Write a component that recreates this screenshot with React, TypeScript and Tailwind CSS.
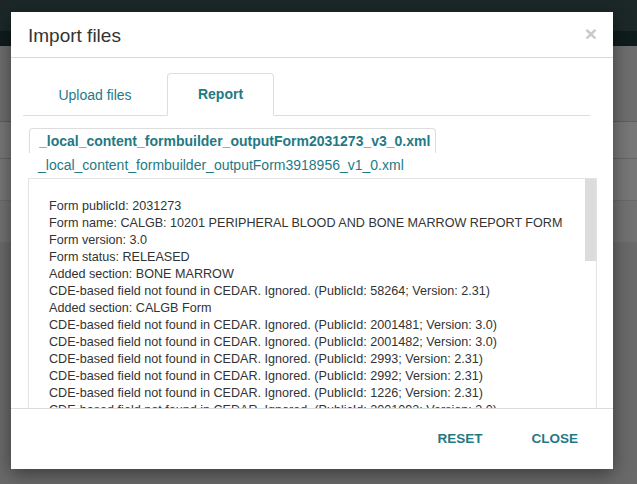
import React from "react";

const teal = "text-[#1f7a85]";

const reportLines = [
  "Form publicId: 2031273",
  "Form name: CALGB: 10201 PERIPHERAL BLOOD AND BONE MARROW REPORT FORM",
  "Form version: 3.0",
  "Form status: RELEASED",
  "Added section: BONE MARROW",
  "CDE-based field not found in CEDAR. Ignored. (PublicId: 58264; Version: 2.31)",
  "Added section: CALGB Form",
  "CDE-based field not found in CEDAR. Ignored. (PublicId: 2001481; Version: 3.0)",
  "CDE-based field not found in CEDAR. Ignored. (PublicId: 2001482; Version: 3.0)",
  "CDE-based field not found in CEDAR. Ignored. (PublicId: 2993; Version: 2.31)",
  "CDE-based field not found in CEDAR. Ignored. (PublicId: 2992; Version: 2.31)",
  "CDE-based field not found in CEDAR. Ignored. (PublicId: 1226; Version: 2.31)",
  "CDE-based field not found in CEDAR. Ignored. (PublicId: 2001093; Version: 3.0)",
];

export default function App(): React.JSX.Element {
  return (
    <div className="relative h-[484px] w-[637px] overflow-hidden bg-[#6a6a6a] font-['Liberation_Sans',Arial,sans-serif]">
      {/* page behind the backdrop */}
      <div className="h-[31px] bg-[#1c2828]"></div>
      <div className="h-[15px] bg-[#0f1c1c]"></div>
      <div className="h-[75px] bg-[#6e6e6e]"></div>
      <div className="h-[37px] border-t border-[#5f5f5f] bg-[#787878]"></div>
      <div className="h-[42px] border-t border-[#666] bg-[#777]"></div>
      <div className="h-[42px] border-t border-[#6a6a6a] bg-[#727272]"></div>

      {/* modal */}
      <div className="absolute left-[11px] top-[12px] flex h-[457px] w-[602px] flex-col bg-white shadow-[0_5px_18px_rgba(0,0,0,0.45)]">
        <div className="flex h-[46px] shrink-0 items-center justify-between border-b border-[#d9d9d9] pl-[17px] pr-[16px] pt-[2px]">
          <h4 className="text-[19px] leading-none text-[#333]">Import files</h4>
          <span className="mb-[4px] text-[21px] font-bold leading-none text-[#c9c9c9]">×</span>
        </div>

        <div className="h-[350px] shrink-0 overflow-hidden px-[16px] pt-[16px]">
          {/* tabs */}
          <div className="ml-[-4px] mr-[7px] flex h-[42px] items-end border-b border-[#ddd]">
            <div className={`-mb-px ml-[2px] flex h-[42px] w-[140px] items-center justify-center text-[14px] ${teal}`}>
              Upload files
            </div>
            <div className={`-mb-px ml-[2px] flex h-[43px] w-[107px] items-center justify-center rounded-t-[4px] border border-[#ddd] border-b-white bg-white text-[14px] font-bold ${teal}`}>
              Report
            </div>
          </div>

          {/* file tabs */}
          <div className={`ml-[2px] mt-[12px] h-[25px] w-[407px] rounded-t-[4px] border border-b-0 border-[#ddd] px-[9px] text-[14px] font-bold leading-[24px] ${teal}`}>
            _local_content_formbuilder_outputForm2031273_v3_0.xml
          </div>
          <div className={`h-[25px] pl-[11px] text-[14px] leading-[25px] ${teal}`}>
            _local_content_formbuilder_outputForm3918956_v1_0.xml
          </div>

          {/* report */}
          <div className="relative ml-[1px] h-[300px] overflow-hidden border border-[#e3e3e3]">
            <div className="absolute right-0 top-0 h-[82px] w-[11px] bg-[#dcdcdc]"></div>
            <div className="pl-[20px] pt-[19px] text-[12.6px] leading-[17px] text-[#333]">
              {reportLines.map((line, i) => (
                <div key={i} className="whitespace-nowrap">
                  {line}
                </div>
              ))}
            </div>
          </div>
        </div>

        <div className="flex flex-1 items-center justify-end gap-[49px] border-t border-[#dcdcdc] pr-[35px] pt-[1px]">
          <button className={`text-[13.5px] font-bold ${teal}`}>RESET</button>
          <button className={`text-[13.5px] font-bold ${teal}`}>CLOSE</button>
        </div>
      </div>
    </div>
  );
}
